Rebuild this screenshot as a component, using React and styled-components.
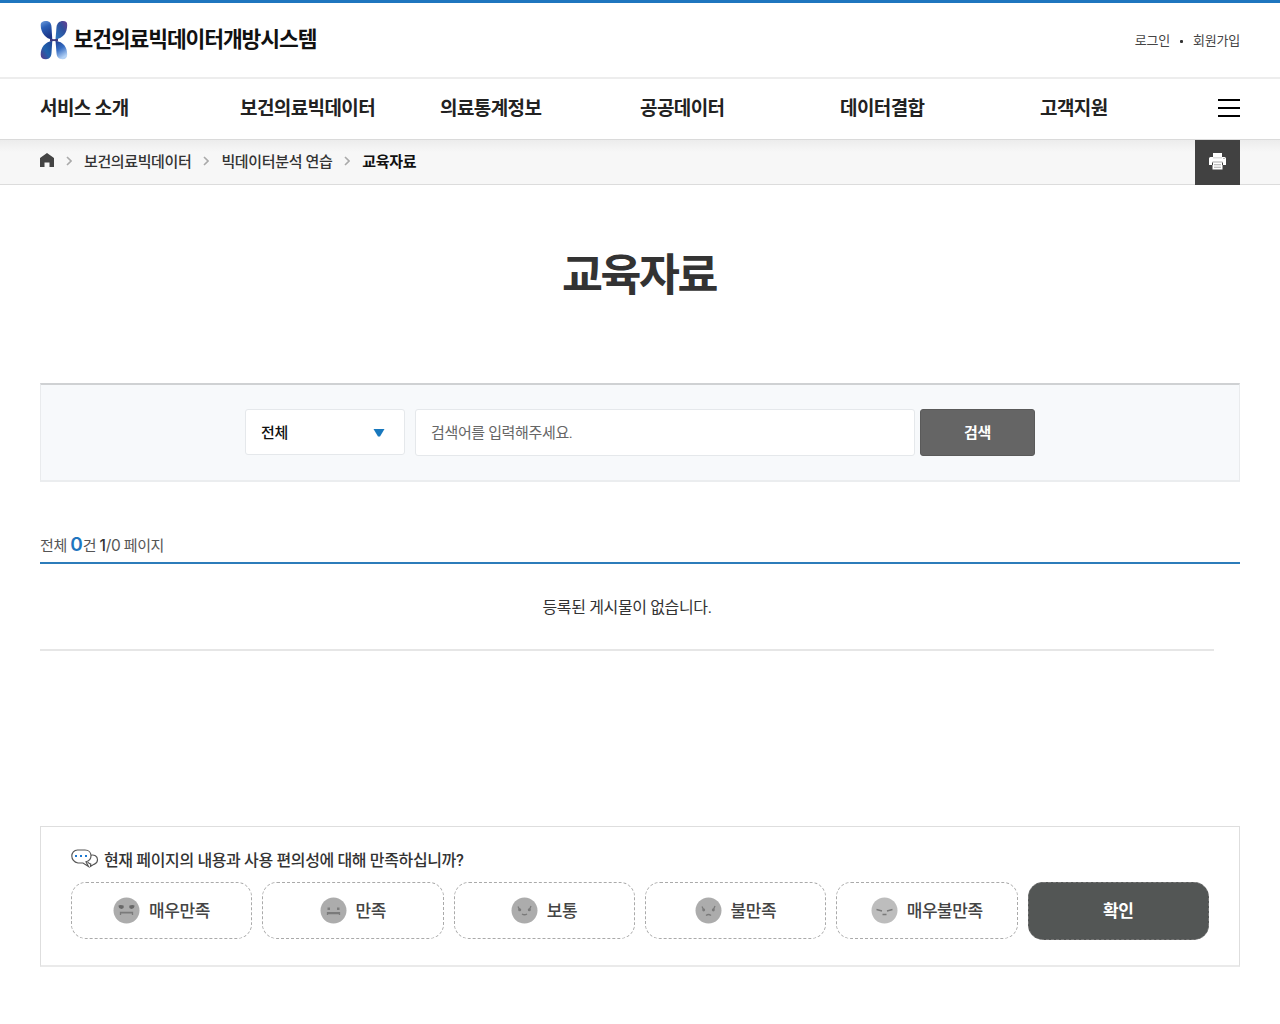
import React from "react";
import styled, { createGlobalStyle } from "styled-components";

const Global = createGlobalStyle`
  *, *::before, *::after { box-sizing: border-box; }
  body { margin: 0; background: #fff; color: #333; font-family: Roboto, "Noto Sans CJK KR", sans-serif; }
  button, input { font-family: inherit; }
  h1, p, ul, ol { margin: 0; padding: 0; list-style: none; }
`;

const Page = styled.div`min-height: 1024px; overflow: hidden;`;

const Inner = styled.div`
  width: 1200px;
  height: 100%;
  margin: 0 auto;
  display: flex;
  align-items: center;
`;

const Text = styled.span`
  font-size: ${(p) => p.$size}px;
  font-weight: ${(p) => p.$weight || 400};
  letter-spacing: ${(p) => p.$track || 0}px;
  color: ${(p) => p.$color || "#333"};
  line-height: 1.4;
  padding-top: ${(p) => p.$drop || 0}px;
  white-space: nowrap;
`;
const Digit = styled(Text)`font-family: Inter, sans-serif;`;

const TopBar = styled.header`
  height: 79px;
  border-top: 3px solid #1f76bf;
  border-bottom: 2px solid #ededed;
`;
const Logo = styled.a`
  display: flex;
  align-items: center;
  gap: 6px;
  margin-left: -0.5px;
`;
const LogoText = styled(Text)`margin-top: 1px;`;
const UserLinks = styled.div`
  margin-left: auto;
  display: flex;
  align-items: center;
  gap: 10px;
`;
const Dot = styled.i`width: 3px; height: 3px; margin-top: 3px; border-radius: 1px; background: #333;`;

const Nav = styled.nav`
  height: 61px;
  border-bottom: 1px solid #dadada;
`;
const Menu = styled.ul`display: flex; padding-top: 1px;`;
const MenuItem = styled.li`width: 200px; flex: none; &:last-child { width: 178px; }`;
const Burger = styled.button`
  width: 22px;
  height: 18px;
  padding: 0;
  border: 0;
  background: none;
  flex: none;
  display: flex;
  flex-direction: column;
  justify-content: space-between;
  margin-bottom: 3px;
  i { height: 2px; background: #000; }
`;

const Crumbs = styled.div`
  height: 45px;
  border-bottom: 1px solid #dcdcdc;
  background: linear-gradient(#ececec, #f7f7f7 12px);
`;
const Trail = styled.ol`
  display: flex;
  align-items: center;
  padding-bottom: 2px;
`;
const HomeIcon = styled.svg`width: 14px; height: 14px; display: block; margin-bottom: 2px;`;
const Chevron = styled.svg`width: 6px; height: 10px; margin: 0 12px 0 12px;`;
const PrintButton = styled.button`
  margin-left: auto;
  width: 45px;
  height: 45px;
  flex: none;
  align-self: flex-start;
  border: 0;
  padding: 0 0 2px;
  background: #414141;
  display: flex;
  align-items: center;
  justify-content: center;
`;

const Main = styled.main`width: 1200px; margin: 0 auto;`;
const Title = styled.h1`
  height: 198px;
  padding: 59px 2px 0 0;
  text-align: center;
  font-size: 44.5px;
  line-height: 64px;
  font-weight: 700;
  letter-spacing: -2.4px;
  color: #333;
`;
const SearchBox = styled.form`
  height: 99px;
  border: 1px solid #e9ebed;
  border-top: 2px solid #cfd1d3;
  border-bottom: 2px solid #ebedef;
  background: #f7f9fb;
  display: flex;
  justify-content: center;
  padding-top: 24px;
`;
const Select = styled.div`
  width: 160px;
  height: 46px;
  margin-right: 10px;
  padding: 0 19px 0 15px;
  border: 1px solid #e5e8eb;
  border-radius: 3px;
  background: #fff;
  display: flex;
  align-items: center;
  justify-content: space-between;
`;
const SelectArrow = styled.svg`width: 12px; height: 8px; margin-top: 1px;`;
const Input = styled.input`
  width: 500px;
  height: 47px;
  margin-right: 5px;
  padding: 0 15px;
  border: 1px solid #e5e8eb;
  border-radius: 3px;
  background: #fff;
  font-size: 15px;
  letter-spacing: -0.35px;
  &::placeholder { color: #666; opacity: 1; }
`;
const SearchButton = styled.button`
  width: 115px;
  height: 47px;
  border: 1px solid #5a5a5a;
  border-radius: 3px;
  background: #656565;
  padding: 1px 0 0;
`;

const Count = styled.p`
  height: 82px;
  border-bottom: 2px solid #2c7cba;
  display: flex;
  align-items: baseline;
  padding-top: 50px;
`;
const Empty = styled.div`
  width: 1174px;
  height: 87px;
  border-bottom: 2px solid #e6e6e6;
  display: flex;
  align-items: center;
  justify-content: center;
`;

const Survey = styled.section`
  margin-top: 175px;
  height: 141px;
  border: 1px solid #dedede;
  border-bottom: 2px solid #eaeaea;
  padding: 20px 30px 0;
`;
const Question = styled.div`display: flex; align-items: center; gap: 5px; height: 26px;`;
const BubbleIcon = styled.svg`width: 28px; height: 19px; margin-bottom: 3px;`;
const Choices = styled.div`
  display: grid;
  grid-template-columns: repeat(6, 1fr);
  gap: 10px;
  margin-top: 9px;
`;
const Choice = styled.button`
  height: ${(p) => (p.$dark ? 58 : 57)}px;
  padding: 0;
  border: 1px dashed ${(p) => (p.$dark ? "#777" : "#aaa")};
  border-radius: 15px;
  background: ${(p) => (p.$dark ? "#535655" : "#fff")};
  display: flex;
  align-items: center;
  justify-content: center;
  gap: 8.500px;
`;

const LogoMark = () => (
  <svg width="28" height="40" viewBox="0 0 28 40">
    <defs>
      <linearGradient id="tl" x1="0" y1="0" x2=".3" y2="1">
        <stop offset="0" stopColor="#6f9cdc" /><stop offset=".4" stopColor="#2a5fb6" /><stop offset="1" stopColor="#1b3486" />
      </linearGradient>
      <linearGradient id="tr" x1="1" y1="0" x2="0" y2="1">
        <stop offset="0" stopColor="#6a3f92" /><stop offset=".4" stopColor="#2f4f9c" /><stop offset="1" stopColor="#2a78c0" />
      </linearGradient>
      <linearGradient id="bl" x1="1" y1="0" x2="0" y2="1">
        <stop offset="0" stopColor="#1e4496" /><stop offset=".55" stopColor="#2162ad" /><stop offset="1" stopColor="#5a3586" />
      </linearGradient>
      <linearGradient id="br" x1="0" y1="0" x2=".4" y2="1">
        <stop offset="0" stopColor="#1d3d91" /><stop offset=".5" stopColor="#356cc2" /><stop offset="1" stopColor="#b4d2f6" />
      </linearGradient>
    </defs>
    <path fill="url(#tl)" d="M.7 5C.7 2 3 1 6 1c3.500 0 5.200 2 5.500 6l.8 12.500C6 19 .7 13 .7 5Z" />
    <path fill="url(#tr)" d="M16.500 7c.5-4 3-6 6.500-6 3 0 4.200 1 4.200 4 0 8-4 13-11.700 14.500Z" />
    <path fill="url(#bl)" d="M12.300 20.800 11.500 33c-.3 4-2 6.200-5.500 6.200-3.500 0-5.300-1.500-5.300-4.500 0-7 4-12.500 11.600-13.900Z" />
    <path fill="url(#br)" d="M15.500 20.800c8 1.200 11.700 6.200 11.700 13.700 0 3-1.500 4.700-4.700 4.700-4 0-5.700-2.200-6-6.200Z" />
    <path fill="#3d3a7c" d="M10 18.800q4 .8 8 0v2.700q-4-.8-8 0Z" />
  </svg>
);

const Arrow = () => (
  <Chevron viewBox="0 0 6 10">
    <path d="M1 1l4 4-4 4" fill="none" stroke="#aaa" strokeWidth="1.600" />
  </Chevron>
);

const Printer = () => (
  <svg width="17" height="17" viewBox="0 0 17 17">
    <path fill="#fff" d="M4 0h9v4h2.500Q17 4 17 5.500V12h-3.500v4.500h-10V12H0V5.500Q0 4 1.500 4H4Z" />
    <path fill="#ddd" d="M4 4h9v1.500H4Z" />
    <path fill="#777" d="M14.500 5h1v1h-1Z" />
    <path fill="#aaa" d="M3.500 8.500h10v1h-10ZM5 11.200h7v1H5ZM5 13.700h7v1H5Z" />
    <path fill="#414141" d="M3 9.500h1v2.500H3ZM13 9.500h1v2.500h-1Z" />
  </svg>
);

const Bubbles = () => (
  <BubbleIcon viewBox="0 0 28 19" fill="none" stroke="#555" strokeWidth="1.150">
    <path fill="#fff" d="M18.500 6.500c5-1.500 8 1 8 4.300 0 2-1 3.500-3 4.300l-1 .4-3 1.900.3-2.300c-1.300-.4-2.500-1-3.300-2.300" />
    <path fill="#fff" d="M6.500 1H14c4 0 6 2.800 6 5.800s-2 5.200-5 6l2.500 4.700-5.500-3.500H7C3 13.500 .8 10 .8 7S3 1 6.500 1Z" />
    <path stroke="#1c79d2" strokeWidth="2" d="M4 7h2M9 7h2M14 7h2" />
  </BubbleIcon>
);

const faceParts = [
  <g key="0"><path fill="#686868" stroke="none" d="M5.500 8.500q2-1 5 0 1 3-2 3.500Q5.500 11.500 5.500 8.500Zm16 0q-2-1-5 0-1 3 2 3.500Q21.500 11.500 21.500 8.500Z" /><path d="M7.500 18v-2.500h12V18M7.500 15.900h12" /></g>,
  <g key="1"><path fill="#7c7c7c" stroke="none" d="M7.500 10.500H10V13H7.500Zm9.500 0h2.500V13H17Z" /><path d="M7.500 18v-2.300h12V18M7.500 16.500h12" /></g>,
  <g key="2"><path d="m7 9.500 1.500 3M20 9l-1.500 3.500" /><circle cx="8.700" cy="12.700" r=".9" fill="#777" /><circle cx="18.300" cy="12.700" r=".9" fill="#777" /><path d="M11 17q2.500 1.500 5 0" /></g>,
  <g key="3"><path d="m7 9.500 1.500 3M20 9l-1.500 3.500" /><circle cx="8.700" cy="13" r=".8" fill="#777" /><circle cx="18.300" cy="13" r=".8" fill="#777" /><path d="M11 18.500q2.500-2 5 0" /></g>,
  <g key="4"><path d="m5.500 12.500 5.500 1.500M21.500 12.500 16 14M11.500 17.500h4" /></g>,
];

const Face = ({ kind }) => (
  <svg width="27" height="27" viewBox="0 0 27 27" fill="none" stroke="#7a7a7a" strokeWidth="1.300">
    <circle cx="13.500" cy="13.500" r="13" fill={kind === 4 ? "#bdbdbd" : "#acacac"} stroke="none" />
    {faceParts[kind]}
  </svg>
);

const menu = ["서비스 소개", "보건의료빅데이터", "의료통계정보", "공공데이터", "데이터결합", "고객지원"];
const choices = ["매우만족", "만족", "보통", "불만족", "매우불만족"];

export default function App() {
  return (
    <Page>
      <Global />
      <TopBar>
        <Inner>
          <Logo>
            <LogoMark />
            <LogoText $size={21.500} $weight={700} $track={-1.100} $color="#111">보건의료빅데이터개방시스템</LogoText>
          </Logo>
          <UserLinks>
            <Text $size={13} $track={-0.200} $drop={2} $color="#444">로그인</Text>
            <Dot />
            <Text $size={13} $track={-0.200} $drop={2} $color="#444">회원가입</Text>
          </UserLinks>
        </Inner>
      </TopBar>
      <Nav>
        <Inner>
          <Menu>
            {menu.map((m) => (
              <MenuItem key={m}><Text $size={19} $weight={700} $track={-0.600} $color="#222">{m}</Text></MenuItem>
            ))}
          </Menu>
          <Burger aria-label="전체메뉴"><i /><i /><i /></Burger>
        </Inner>
      </Nav>
      <Crumbs>
        <Inner>
          <Trail>
            <HomeIcon viewBox="0 0 14 14"><path fill="#444" d="M7 0 14 5v9H9.500V9.500h-5V14H0V5Z" /></HomeIcon>
            <Arrow />
            <Text $size={15} $weight={500} $track={-0.380} $drop={2}>보건의료빅데이터</Text>
            <Arrow />
            <Text $size={15} $weight={500} $track={-0.350} $drop={2}>빅데이터분석 연습</Text>
            <Arrow />
            <Text $size={15} $weight={700} $track={-0.300} $drop={2} $color="#111">교육자료</Text>
          </Trail>
          <PrintButton aria-label="인쇄"><Printer /></PrintButton>
        </Inner>
      </Crumbs>
      <Main>
        <Title>교육자료</Title>
        <SearchBox>
          <Select>
            <Text $size={15} $weight={500} $track={-0.400} $drop={2} $color="#111">전체</Text>
            <SelectArrow viewBox="0 0 12 8"><path fill="#1878bd" d="M.5 0h11L7 7.500H5Z" /></SelectArrow>
          </Select>
          <Input placeholder="검색어를 입력해주세요." />
          <SearchButton type="button"><Text $size={15} $weight={700} $track={-0.300} $color="#fff">검색</Text></SearchButton>
        </SearchBox>
        <Count>
          <Text $size={15} $track={-0.400} $color="#555">전체&nbsp;</Text>
          <Digit $size={19} $weight={600} $color="#1f76bf">0</Digit>
          <Text $size={15} $track={-0.400} $color="#555">건&nbsp;</Text>
          <Digit $size={15.500} $weight={500}>1</Digit>
          <Digit $size={15.500} $track={-0.400} $color="#555">/0</Digit>
          <Text $size={15} $track={-0.400} $color="#555">&nbsp;페이지</Text>
        </Count>
        <Empty><Text $size={16} $track={-0.350} $drop={3}>등록된 게시물이 없습니다.</Text></Empty>
        <Survey>
          <Question>
            <Bubbles />
            <Text $size={16} $weight={500} $track={-0.360} $drop={2}>현재 페이지의 내용과 사용 편의성에 대해 만족하십니까?</Text>
          </Question>
          <Choices>
            {choices.map((c, i) => (
              <Choice key={c}><Face kind={i} /><Text $size={17} $weight={500} $track={-0.400} $drop={2} $color="#444">{c}</Text></Choice>
            ))}
            <Choice $dark><Text $size={17} $weight={700} $track={-0.400} $drop={2} $color="#fff">확인</Text></Choice>
          </Choices>
        </Survey>
      </Main>
    </Page>
  );
}
